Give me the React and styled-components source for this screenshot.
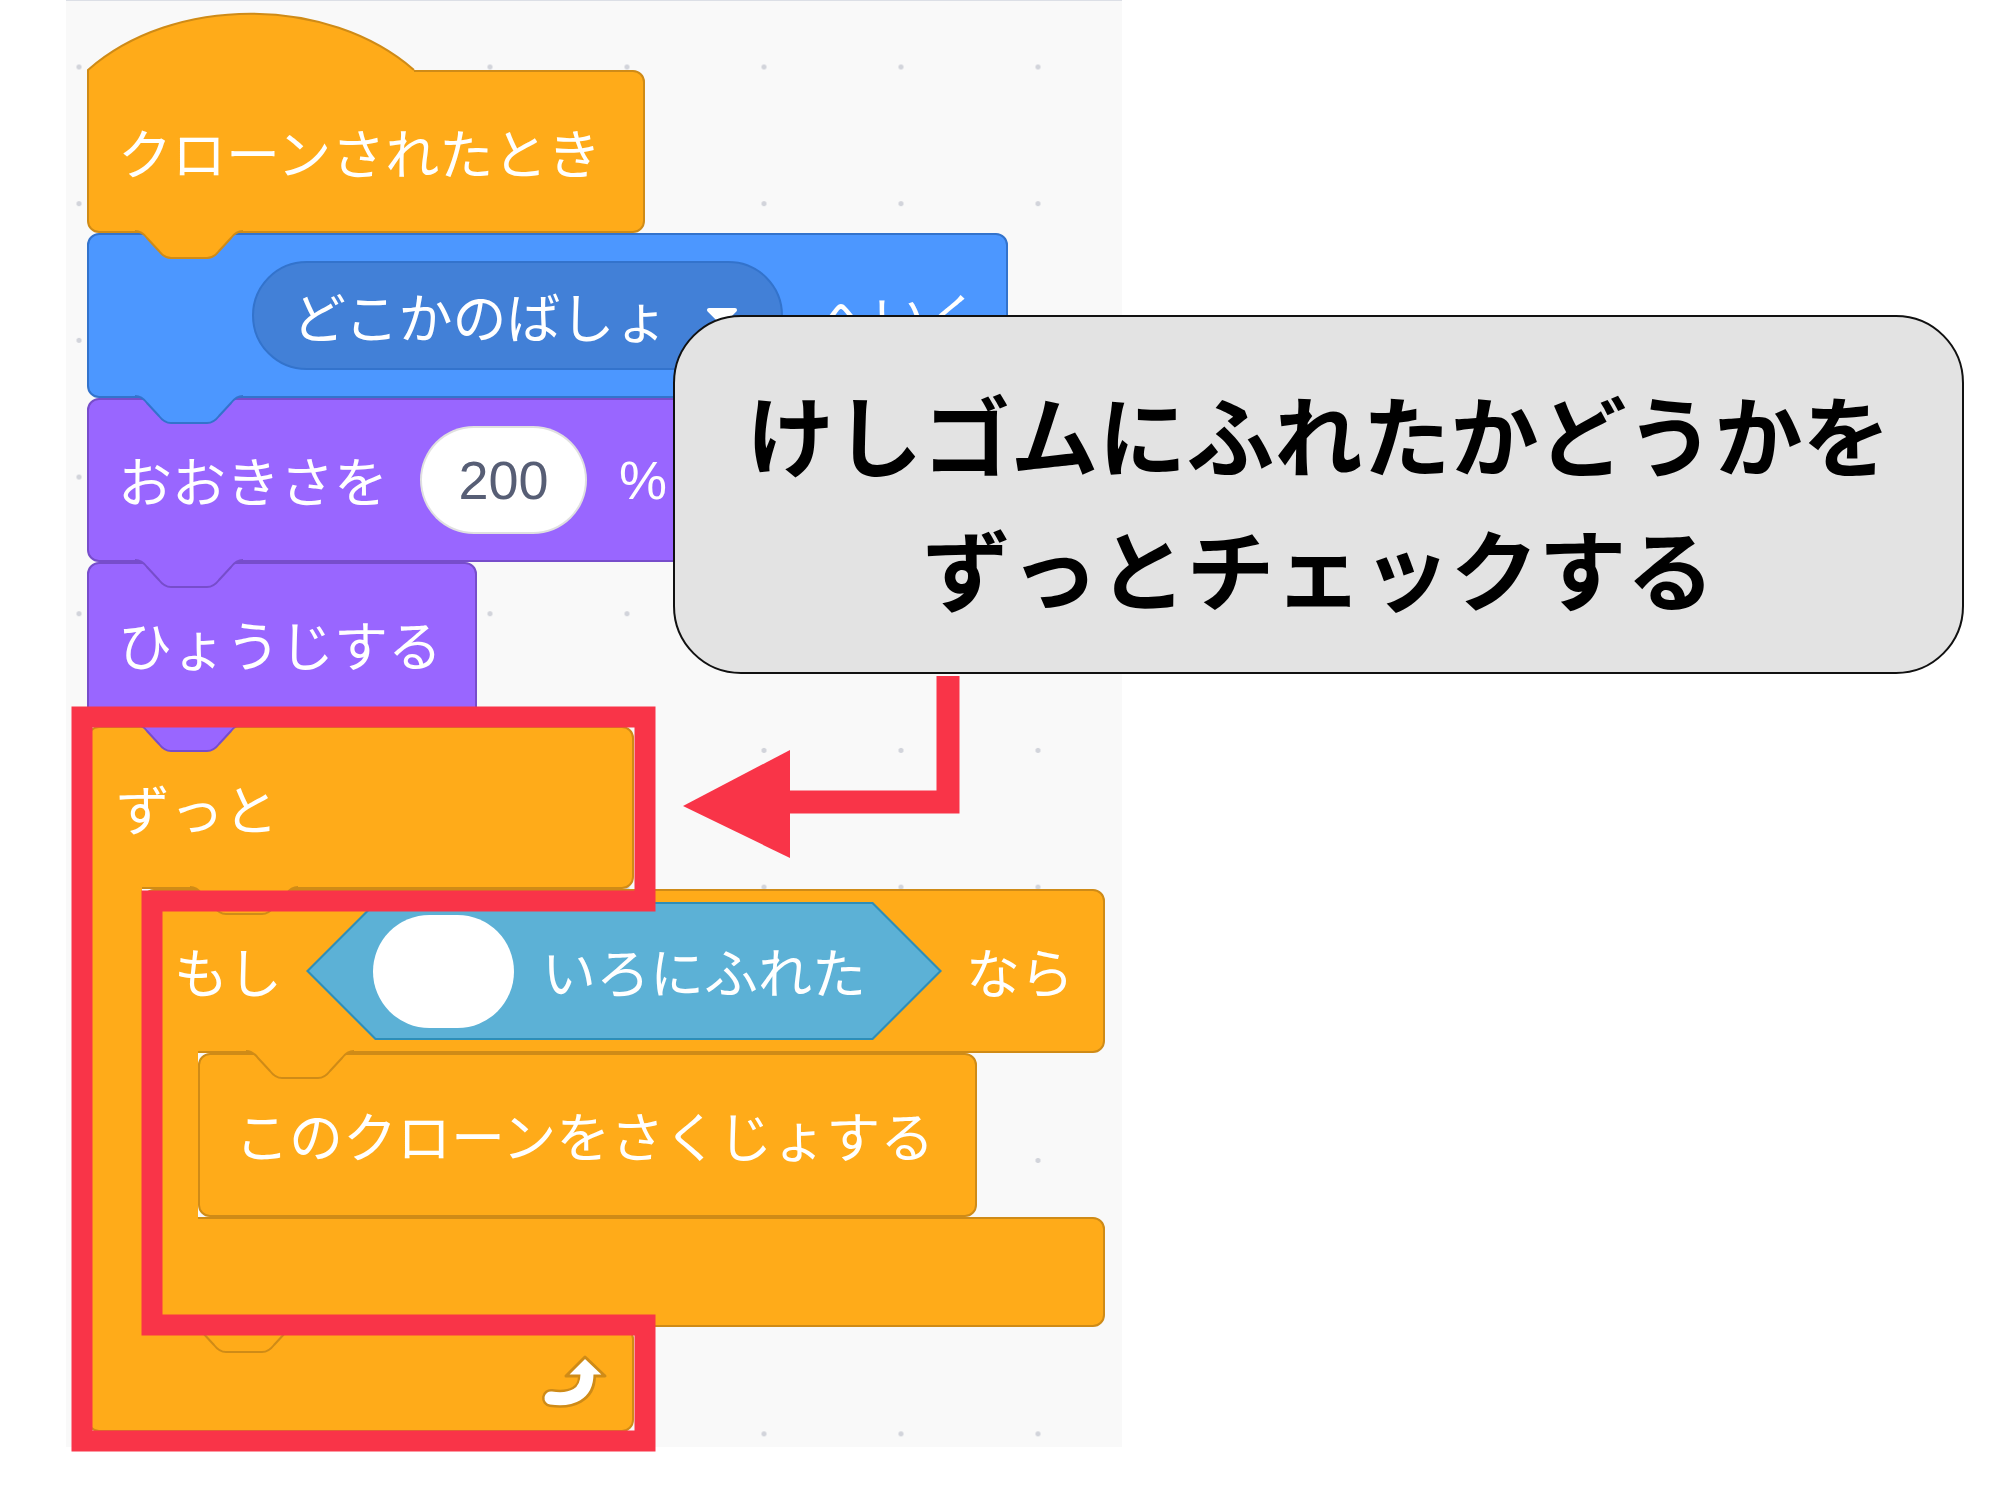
import React from "react";
import styled, { createGlobalStyle } from "styled-components";

const GlobalStyle = createGlobalStyle`
  html, body {
    margin: 0;
    padding: 0;
    background: #ffffff;
  }
  #root {
    width: 2000px;
    height: 1500px;
  }
`;

const colors = {
  control: { fill: "#FFAB19", line: "#CF8B17" },
  motion: { fill: "#4C97FF", line: "#3373CC" },
  looks: { fill: "#9966FF", line: "#774DCB" },
  sensing: { fill: "#5CB1D6", line: "#2E8EB8" },
};

const RED = "#F93448";

const Page = styled.div`
  position: relative;
  width: 2000px;
  height: 1500px;
  overflow: hidden;
  background: #ffffff;
`;

const Workspace = styled.div`
  margin-left: 66px;
  width: 1056px;
  height: 1447px;
  box-sizing: border-box;
  border-top: 1px solid #dcdfe6;
  padding: 69px 0 0 21px;
  background-color: #f9f9f9;
  background-image: radial-gradient(circle, #d2d4db 0 2.2px, transparent 2.9px);
  background-size: 137px 136.7px;
  background-position: -55.5px -2.35px;
`;

const Script = styled.div`
  display: flex;
  flex-direction: column;
  align-items: flex-start;
`;

const Block = styled.div`
  position: relative;
  flex: none;
  box-sizing: border-box;
  display: flex;
  align-items: center;
  gap: ${({ $gap }) => $gap ?? 32}px;
  width: ${({ $w }) => $w}px;
  height: ${({ $h }) => $h}px;
  padding-left: ${({ $pad }) => $pad ?? 29}px;
  background: ${({ $c }) => $c.fill};
  border: 2px solid ${({ $c }) => $c.line};
  border-radius: ${({ $radius }) => $radius ?? "12px"};
  color: #ffffff;
`;

const HatBlock = styled(Block)`
  border-top-left-radius: 0;
`;

const HatCap = styled.svg`
  position: absolute;
  left: -2px;
  top: -58px;
  overflow: visible;
`;

const CBlock = styled.div`
  display: flex;
  flex-direction: column;
  align-items: flex-start;
`;

const CBody = styled.div`
  display: flex;
  align-items: stretch;
`;

const CArm = styled.div`
  position: relative;
  z-index: 1;
  flex: none;
  box-sizing: border-box;
  width: ${({ $w }) => $w}px;
  margin: -2px 0;
  background: ${({ $c }) => $c.fill};
  border-left: 2px solid ${({ $c }) => $c.line};
`;

const CFoot = styled(Block)`
  justify-content: flex-end;
  align-items: flex-start;
  padding: 23px 22px 0 0;
`;

const Label = styled.span`
  font-family: "Noto Sans CJK JP", "Noto Sans", sans-serif;
  font-size: 54px;
  line-height: 1;
  white-space: nowrap;
`;

const Symbol = styled.span`
  font-family: "Liberation Sans", Arial, sans-serif;
  font-size: 54px;
  line-height: 1;
  white-space: nowrap;
`;

const Dropdown = styled.div`
  display: flex;
  align-items: center;
  gap: 37px;
  box-sizing: border-box;
  height: 109px;
  padding: 0 42px 0 38px;
  border-radius: 55px;
  background: #4280d7;
  border: 2px solid #3373cc;
`;

const NumberField = styled.div`
  display: flex;
  align-items: center;
  justify-content: center;
  flex: none;
  box-sizing: border-box;
  width: 167px;
  height: 108px;
  border-radius: 54px;
  background: #ffffff;
  border: 2px solid rgba(0, 0, 0, 0.12);
  color: #575e75;
  font-family: "Liberation Sans", Arial, sans-serif;
  font-size: 54px;
  line-height: 1;
`;

const BoolSlot = styled.div`
  position: relative;
  isolation: isolate;
  display: flex;
  align-items: center;
  gap: 28px;
  box-sizing: border-box;
  height: 138px;
  padding: 0 76px 0 67px;

  &::before,
  &::after {
    content: "";
    position: absolute;
    z-index: -1;
  }
  &::before {
    inset: 0;
    background: ${colors.sensing.line};
    clip-path: polygon(0 50%, 69px 0, calc(100% - 69px) 0, 100% 50%, calc(100% - 69px) 100%, 69px 100%);
  }
  &::after {
    inset: 2px 3px;
    background: ${colors.sensing.fill};
    clip-path: polygon(0 50%, 67px 0, calc(100% - 67px) 0, 100% 50%, calc(100% - 67px) 100%, 67px 100%);
  }
`;

const ColorSwatch = styled.div`
  flex: none;
  width: 141px;
  height: 113px;
  border-radius: 57px;
  background: #ffffff;
`;

const TabShape = styled.svg`
  position: absolute;
  top: 100%;
  left: ${({ $x }) => $x}px;
  overflow: visible;
  z-index: 1;
`;

const Callout = styled.div`
  position: absolute;
  left: 673px;
  top: 315px;
  z-index: 5;
  box-sizing: border-box;
  width: 1291px;
  height: 359px;
  padding-top: 9px;
  display: flex;
  flex-direction: column;
  justify-content: center;
  align-items: center;
  background: #e3e3e3;
  border: 2px solid #111111;
  border-radius: 68px;
  color: #000000;
  font-family: "Noto Sans CJK JP", "Noto Sans", sans-serif;
  font-weight: 700;
  font-size: 88px;
  line-height: 134px;
`;

const CalloutLine = styled.div`
  white-space: nowrap;
`;

const Overlay = styled.svg`
  position: absolute;
  left: 0;
  top: 0;
  z-index: 4;
  pointer-events: none;
`;

const NOTCH =
  "M0 0 c6 0 9 3 12 7 l12 13 c3 4 6 7 12 7 h36 c6 0 9 -3 12 -7 l12 -13 c3 -4 6 -7 12 -7";

function Tab({ c, x = 46 }) {
  return (
    <TabShape $x={x} width="108" height="28" viewBox="0 0 108 28">
      <path d={NOTCH + " Z"} fill={c.fill} />
      <path d={NOTCH} fill="none" stroke={c.line} strokeWidth="2" />
    </TabShape>
  );
}

function DropArrow() {
  return (
    <svg width="34" height="20" viewBox="0 0 34 20">
      <path d="M4 4 H30 L17 17 Z" fill="#fff" stroke="#fff" strokeWidth="4" strokeLinejoin="round" />
    </svg>
  );
}

function LoopArrow() {
  return (
    <svg width="70" height="62" viewBox="0 0 70 62">
      <path d="M47 24 C47 42 32 49 11 46" fill="none" stroke={colors.control.line} strokeWidth="18" strokeLinecap="round" />
      <polygon points="45,5 65,24 26,24" fill="#fff" stroke={colors.control.line} strokeWidth="3" strokeLinejoin="round" />
      <path d="M47 22 C47 42 32 49 11 46" fill="none" stroke="#fff" strokeWidth="13" strokeLinecap="round" />
    </svg>
  );
}

export default function App() {
  const ctl = colors.control;
  return (
    <>
      <GlobalStyle />
      <Page>
        <Workspace>
          <Script>
            <HatBlock $c={ctl} $w={558} $h={163}>
              <HatCap width="330" height="62" viewBox="0 0 330 62">
                <path d="M1 56 C86 -19 241 -19 327 56 L327 61 L1 61 Z" fill={ctl.fill} />
                <path d="M1 61 L1 56 C86 -19 241 -19 327 56" fill="none" stroke={ctl.line} strokeWidth="2" />
              </HatCap>
              <Label>クローンされたとき</Label>
              <Tab c={ctl} />
            </HatBlock>

            <Block $c={colors.motion} $w={921} $h={165} $pad={163} $gap={35}>
              <Dropdown>
                <Label>どこかのばしょ</Label>
                <DropArrow />
              </Dropdown>
              <Label>へいく</Label>
              <Tab c={colors.motion} />
            </Block>

            <Block $c={colors.looks} $w={800} $h={164}>
              <Label>おおきさを</Label>
              <NumberField>200</NumberField>
              <Symbol>%</Symbol>
              <Tab c={colors.looks} />
            </Block>

            <Block $c={colors.looks} $w={390} $h={164}>
              <Label>ひょうじする</Label>
              <Tab c={colors.looks} />
            </Block>

            <CBlock>
              <Block $c={ctl} $w={547} $h={163} $pad={27} $radius="12px 12px 12px 0">
                <Label>ずっと</Label>
                <Tab c={ctl} x={101} />
              </Block>
              <CBody>
                <CArm $c={ctl} $w={55} />
                <CBlock>
                  <Block $c={ctl} $w={963} $h={164} $pad={30} $gap={24} $radius="12px 12px 12px 0">
                    <Label>もし</Label>
                    <BoolSlot>
                      <ColorSwatch />
                      <Label>いろにふれた</Label>
                    </BoolSlot>
                    <Label>なら</Label>
                    <Tab c={ctl} x={102} />
                  </Block>
                  <CBody>
                    <CArm $c={ctl} $w={56} />
                    <Block $c={ctl} $w={779} $h={164} $pad={35}>
                      <Label>このクローンをさくじょする</Label>
                    </Block>
                  </CBody>
                  <Block $c={ctl} $w={963} $h={110} $radius="0 12px 12px 12px">
                    <Tab c={ctl} />
                  </Block>
                </CBlock>
              </CBody>
              <CFoot $c={ctl} $w={547} $h={105} $radius="0 12px 12px 12px">
                <LoopArrow />
              </CFoot>
            </CBlock>
          </Script>
        </Workspace>

        <Overlay width="2000" height="1500" viewBox="0 0 2000 1500">
          <polygon
            points="82,717 645,717 645,901 152,901 152,1325 645,1325 645,1441 82,1441"
            fill="none"
            stroke={RED}
            strokeWidth="21"
            strokeLinejoin="miter"
          />
          <polyline points="948,676 948,802 788,802" fill="none" stroke={RED} strokeWidth="23" strokeLinejoin="miter" />
          <polygon points="683,806 790,750 790,858" fill={RED} />
        </Overlay>

        <Callout>
          <CalloutLine>けしゴムにふれたかどうかを</CalloutLine>
          <CalloutLine>ずっとチェックする</CalloutLine>
        </Callout>
      </Page>
    </>
  );
}
